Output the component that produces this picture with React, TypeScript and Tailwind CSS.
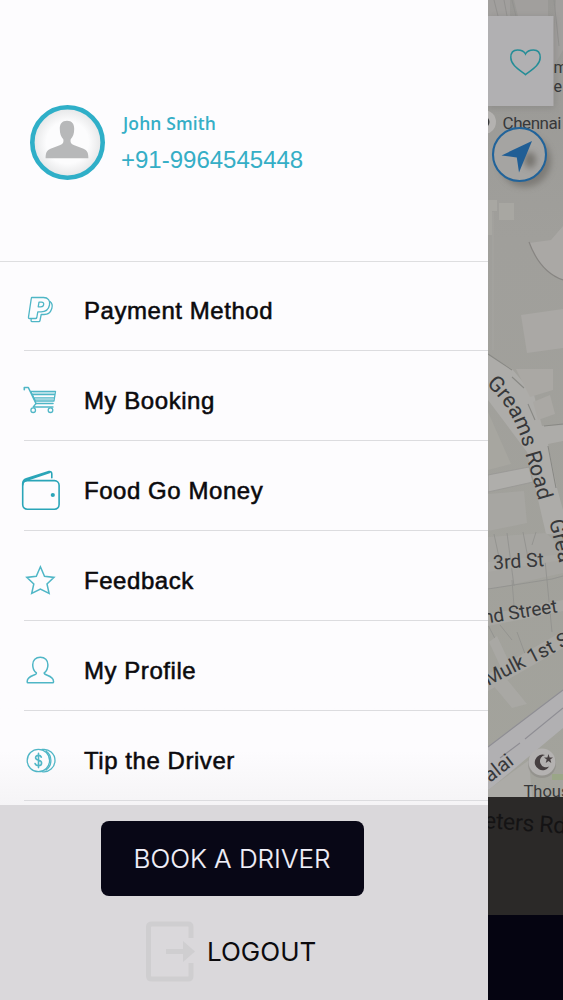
import type { ReactNode } from "react";

type MenuItem = { label: string; icon: ReactNode };

const stroke = {
  fill: "none",
  stroke: "#4fb6c6",
  strokeWidth: 1.3,
  strokeLinejoin: "round" as const,
  strokeLinecap: "round" as const,
};

// Menu icons share a 44x44 grid centred on the row.
function Icon({ children }: { children: ReactNode }) {
  return (
    <svg viewBox="0 0 44 44" className="h-11 w-11 shrink-0" {...stroke}>
      {children}
    </svg>
  );
}

const items: MenuItem[] = [
  {
    label: "Payment Method",
    icon: (
      <Icon>
        <path d="M14 9.5H25.5C30 9.5 32.5 12.5 31.5 17C30.5 22 27.5 23.8 23 23.8H19.8L18.8 29.5Q18.6 30.5 17.5 30.5H11.4Q10.2 30.5 10.5 29.2L13.3 10.4Q13.4 9.5 14 9.5Z" />
        <path d="M21 14.2H23.5Q26.2 14.2 25.6 16.8Q25.2 18.8 22.7 18.8H20.2Z" />
        <path d="M32 13.5Q35.2 16 33.8 20.5C32.5 25 29.7 26.5 26 26.5H23.2L22 32.5Q21.8 33.6 20.8 33.6H14Q12.7 33.6 13.2 31.2" />
      </Icon>
    ),
  },
  {
    label: "My Booking",
    icon: (
      <Icon>
        <path d="M6.3 11.8V9.5H10.3L18 25.5H35" strokeWidth="1.6" />
        <path d="M12.8 13.3H37.5L36 23H17.3ZM14.3 16.5H37M15.6 19.8H36.5M18 25.5L15.2 29H35" />
        <path d="M15 14.9H36M17 21.4H35" strokeOpacity=".55" />
        <circle cx="15.2" cy="32.2" r="2.3" />
        <circle cx="32.5" cy="32.2" r="2.3" />
      </Icon>
    ),
  },
  {
    label: "Food Go Money",
    icon: (
      <Icon>
        <g stroke="#2aa5b8" strokeWidth="1.6">
          <rect x="4.7" y="12.6" width="36.4" height="28.6" rx="4.6" />
          <path d="M4.7 17V15.5Q4.9 11.8 8.3 10.8L31 3.6Q33.6 3 33.8 5.7V9.8M6.2 13.3L11.5 11.2L31.5 4.6" />
        </g>
        <circle cx="34.8" cy="27" r="2.1" fill="#2aa5b8" stroke="none" />
      </Icon>
    ),
  },
  {
    label: "Feedback",
    icon: (
      <Icon>
        <path
          d="M22.4 8.8L26.5 18.3L36 19.4L29 26L31.1 35.5L22.4 31.2L13.7 35.5L15.8 26L8.8 19.4L18.3 18.3Z"
          strokeWidth="1.5"
          strokeLinejoin="miter"
        />
      </Icon>
    ),
  },
  {
    label: "My Profile",
    icon: (
      <Icon>
        <path
          d="M22.3 9.2C17.8 9.2 14.7 12 14.7 16.7C14.7 20.5 16 23.1 18.4 24.9C19.3 27.5 9.2 27.1 9.2 33.2V33.9Q9.2 34.7 10 34.7H34.7Q35.5 34.7 35.5 33.9V33.2C35.5 27.1 25.4 27.5 26.2 24.9C28.6 23.1 29.9 20.5 29.9 16.7C29.9 12 26.9 9.2 22.3 9.2Z"
          strokeWidth="1.5"
        />
      </Icon>
    ),
  },
  {
    label: "Tip the Driver",
    icon: (
      <Icon>
        <circle cx="20.4" cy="22.5" r="11.2" />
        <path d="M24 11.5C31 10.2 37 15.8 37 22.5S31 34.8 24 33.6M28 13C34.5 17.5 34.5 27.5 28 32" />
        <path
          d="M23.3 19.1C22.8 17.8 21.8 17.4 20.5 17.4C18.5 17.4 17.5 18.5 17.6 19.9C17.9 23.2 23.6 21.4 23.6 25C23.6 26.7 22.4 27.7 20.5 27.7C18.8 27.7 17.6 27 17.1 25.5M20.5 15.4V29.6"
          strokeWidth="1.6"
        />
      </Icon>
    ),
  },
];

function Avatar() {
  return (
    <svg viewBox="0 0 76 76" className="h-19 w-19 shrink-0">
      <defs>
        <radialGradient id="avatar-bg">
          <stop offset="0.6" stopColor="#fcfcfd" />
          <stop offset="1" stopColor="#e4e5e6" />
        </radialGradient>
      </defs>
      <circle cx="38.5" cy="37.5" r="35.2" fill="url(#avatar-bg)" stroke="#2fafc8" strokeWidth="4.6" />
      <path
        d="M38 15.8C33 15.8 30.8 19 30.8 23.8C30.8 28.8 32 32 34.3 34.2C35 37.8 33.5 39.2 30 40.6L21.5 43.8C17.4 45.4 16.6 48.5 16.6 53.3H59.4C59.4 48.5 58.6 45.4 54.5 43.8L46 40.6C42.5 39.2 41 37.8 41.7 34.2C44 32 45.2 28.8 45.2 23.8C45.2 19 43 15.8 38 15.8Z"
        fill="#b7b8b9"
      />
    </svg>
  );
}

function StreetMap() {
  return (
    <svg
      viewBox="488 0 75 797"
      className="block h-[797px] w-[75px]"
      fontFamily="Roboto, sans-serif"
      fill="#37383a"
    >
      <defs>
        <linearGradient id="land" x1="0" y1="0" x2="0" y2="1">
          <stop offset="0" stopColor="#999895" />
          <stop offset="0.3" stopColor="#a09f9b" />
          <stop offset="1" stopColor="#a3a39c" />
        </linearGradient>
        <filter id="soft" x="-50%" y="-50%" width="200%" height="200%">
          <feGaussianBlur stdDeviation="3" />
        </filter>
        <path id="greams" d="M486 384Q512 408 522 442T540 505" />
      </defs>
      <rect x="488" width="75" height="797" fill="url(#land)" />
      {/* Top blocks and save card */}
      <path d="M488 0H510V18H488ZM514 0H548V16H518ZM556 0H563V50L552 70Z" fill="#a19f9d" />
      <path d="M494 0L498 16M504 0L507 16M512 0L516 16M554 0L559 46" stroke="#92918f" strokeWidth="1" />
      <rect x="488" y="17" width="67" height="91" fill="#777674" opacity=".4" filter="url(#soft)" />
      <rect x="488" y="16" width="65.5" height="90" fill="#b1b0b2" />
      <path
        d="M525.5 74.7C519 69.7 510.8 65 510.8 57.5C510.8 52 514 50 517.5 50C521.5 50 524.5 52 525.5 54C526.5 52 529.5 50 533.5 50C537 50 540.2 52 540.2 57.5C540.2 65 532 69.7 525.5 74.7Z"
        fill="none"
        stroke="#258d97"
        strokeWidth="1.5"
      />
      <text x="553.5" y="73" fontSize="16">m</text>
      <text x="553.5" y="92" fontSize="16">e</text>
      <circle cx="484" cy="122" r="12" fill="#b4b2b0" />
      <path d="M488 118Q491 122 488 126Z" />
      <text x="502.5" y="128.5" fontSize="17" textLength="59">Chennai</text>
      {/* Locate button */}
      <circle cx="525" cy="161" r="26" fill="#625f5a" opacity=".55" filter="url(#soft)" />
      <circle cx="519.5" cy="154.5" r="26.5" fill="#a5a4a2" stroke="#21639a" strokeWidth="2.1" />
      <ellipse cx="530" cy="160" rx="6" ry="8" fill="#65625c" opacity=".7" filter="url(#soft)" />
      <path d="M532 141L501.5 155.4L516.8 157.4L519 172.5Z" fill="#205e95" />
      {/* Buildings */}
      <path d="M499 203H514V220H499ZM488 200H497V211H492V235H488Z" fill="#a8a7a2" />
      <path d="M529 243Q542 273 563 280V226L551 240Z" fill="#aaa8a5" />
      <path d="M529 242Q540 272 563 280" fill="none" stroke="#878582" strokeWidth="1.2" />
      <path d="M521 315L563 309V348L527 353Z" fill="#aaa8a5" />
      <path d="M493 212V350" stroke="#a5a4a0" />
      {/* Northern roads */}
      <path d="M488 354L512 369L534 395L542 426L563 425V441L548 444L557 488L563 510V535L546 534L527 452L488 400Z" fill="#adaca9" />
      <path d="M516 369H553V390L530 397Z" fill="#aaa8a4" />
      <path d="M533 402L550 395L555 414L538 420Z" fill="#aaa8a4" />
      <path d="M488 354L512 370M512 377L524 388M528 404L535 420M544 426L563 424M548 446L556 488" fill="none" stroke="#898985" strokeWidth="1.1" />
      <path d="M488 412L511 464L488 470Z" fill="#a7a6a0" />
      <path d="M488 475L529 467L533 482L488 492Z" fill="#afaeab" stroke="#989794" strokeWidth=".8" />
      <path d="M488 494L524 491L527 523L488 531Z" fill="#a7a6a2" />
      <path d="M488 537L546 533L563 550V573L488 590Z" fill="#a6a5a1" />
      <path
        d="M494 534L500 562M507 533L514 586M523 532L528 558M536 532L532 545M545 560L552 632M488 589L552 579L563 576M512 580L514 606M500 625L512 640M517 632L528 662M488 625L505 658"
        fill="none"
        stroke="#92928e"
        strokeWidth=".9"
      />
      <path d="M488 562L563 554V560L488 572ZM488 614L563 600V611L488 626ZM488 674L563 631V648L488 691Z" fill="#a9a8a4" />
      <path d="M489 642L497 636L510 664L502 670ZM492 684L504 676L527 704L512 708Z" fill="#a9a8a4" />
      {/* Diagonal highway */}
      <path d="M488 747L563 690V728L490 789L488 790Z" fill="#b1b0b2" />
      <path d="M488 747L563 690M525 739L563 708M500 758L520 743" fill="none" stroke="#8f8e94" strokeWidth="1.1" />
      <path d="M488 790L529 760L532 797H488Z" fill="#acaba7" />
      <path d="M552 774H563V780H552Z" fill="#9aa687" />
      {/* Street names */}
      <text fontSize="21.5">
        <textPath href="#greams" textLength="130">Greams Road</textPath>
      </text>
      <text transform="translate(549 521) rotate(76)" fontSize="21">Grea</text>
      <text transform="translate(493.5 569.5) rotate(-4)" fontSize="19.5" textLength="51">3rd St</text>
      <text transform="translate(484 624) rotate(-9)" fontSize="19" textLength="75">nd Street</text>
      <text transform="translate(488 686) rotate(-27)" fontSize="20">Mulk 1st St</text>
      <text transform="translate(490 783) rotate(-38)" fontSize="20">alai</text>
      {/* Mosque marker */}
      <circle cx="542" cy="764" r="14" fill="#85837f" opacity=".5" />
      <circle cx="542" cy="762" r="13.5" fill="#b4b2b1" />
      <path d="M545 755A7.8 7.8 0 1 0 549.2 766.5A6.2 6.2 0 1 1 545 755Z" fill="#463f40" />
      <path d="M548.5 754L549.6 757.4L553 757.4L550.3 759.5L551.3 763L548.5 761L545.7 763L546.7 759.5L544 757.4L547.4 757.4Z" fill="#463f40" />
      <text x="523.5" y="797" fontSize="16.5">Thous</text>
    </svg>
  );
}

export default function App() {
  return (
    <div className="flex h-[1000px] w-[563px] overflow-hidden bg-[#050411] font-['Liberation_Sans',sans-serif]">
      <aside className="flex w-[488px] shrink-0 flex-col bg-[#fdfcfe]">
        <header className="flex h-[262px] items-start border-b border-[#dedee0] pt-[105px] pl-[29px] text-[#35aec6]">
          <Avatar />
          <div className="pt-1.5 pl-4">
            <div className="pl-0.5 font-['Open_Sans','Noto_Sans',sans-serif] text-[17.5px] leading-6 font-semibold tracking-[0.1px] whitespace-nowrap">
              John Smith
            </div>
            <div className="mt-[11px] text-2xl leading-7 whitespace-nowrap">+91-9964545448</div>
          </div>
        </header>
        <nav className="h-[543px] bg-linear-to-b from-[#fdfcfe] from-90% to-[#f5f4f6]">
          {items.map(({ label, icon }, i) => (
            <div key={label} className={i === 0 ? "h-[89px] pl-6" : "h-[90px] pl-6"}>
              <div className="flex h-full items-center border-b border-[#dcdcdf]">
                <div className="-ml-6 flex w-[84px] pt-2 pl-[18px]">{icon}</div>
                <span className="pt-2.5 text-2xl leading-8 tracking-[0.55px] whitespace-nowrap text-[#0b0a0d] [-webkit-text-stroke:0.55px_#0b0a0d]">
                  {label}
                </span>
              </div>
            </div>
          ))}
        </nav>
        <footer className="flex flex-1 flex-col bg-[#dad8db] pt-[15.5px] font-['Inter',sans-serif] text-[26px]">
          <button className="ml-[100.5px] flex h-[75px] w-[263px] items-center justify-center rounded-lg bg-[#080716] font-light whitespace-nowrap text-[#f2f1fa] [-webkit-text-stroke:0.2px_#f2f1fa]">
            BOOK A DRIVER
          </button>
          <div className="mt-[25px] ml-[145px] flex items-center">
            <svg viewBox="0 0 52 62" className="h-[62px] w-[52px]" fill="none" stroke="#cfced0" strokeWidth="5">
              <path d="M46 17V6Q46 3 43 3H7Q3.5 3 3.5 6V55Q3.5 58 7 58H43Q46 58 46 55V42" />
              <path d="M21 30.5H43" />
              <path d="M38 20L50 30.5L38 41Z" fill="#cfced0" stroke="none" />
            </svg>
            <span className="pl-2.5 leading-8 text-[#0b0a0d]">LOGOUT</span>
          </div>
        </footer>
      </aside>
      <section className="flex w-[75px] flex-col">
        <StreetMap />
        <div className="h-[118px] overflow-hidden bg-[#2b2928] pt-1.5">
          <div className="-ml-1 origin-left rotate-4 font-['Roboto',sans-serif] text-[23px] leading-9 tracking-[-0.3px] whitespace-nowrap text-[#141314]">
            eters Rd
          </div>
        </div>
        <div className="flex-1 bg-[#050411]" />
      </section>
    </div>
  );
}
